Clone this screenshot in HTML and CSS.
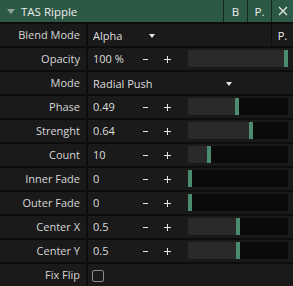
FILE: index.html
```html
<!DOCTYPE html>
<html>
<head>
<meta charset="utf-8">
<link rel="stylesheet" href="styles.css">
</head>
<body>
<div class="panel">
  <div class="header">
    <div class="title"><span class="caret"></span><span>TAS Ripple</span></div>
    <div class="hbtn">B</div>
    <div class="hbtn">P.</div>
    <div class="hbtn x"><svg width="10" height="10" viewBox="0 0 10 10"><path d="M1 1 L9 9 M9 1 L1 9" stroke="#e6e6e6" stroke-width="1.3"/></svg></div>
  </div>

  <div class="row">
    <div class="label">Blend Mode</div>
    <div class="drop blend"><span>Alpha</span><span class="arrow"></span></div>
    <div class="fill"></div>
    <div class="pbtn">P.</div>
  </div>

  <div class="row">
    <div class="label">Opacity</div>
    <div class="val">100 %</div>
    <div class="step"><span class="minus"></span></div>
    <div class="step"><span class="plus"></span></div>
    <div class="slider full"><div class="track" style="width:96px"></div><div class="handle"></div></div>
  </div>

  <div class="row">
    <div class="label">Mode</div>
    <div class="drop mode"><span>Radial Push</span><span class="arrow"></span></div>
  </div>

  <div class="row">
    <div class="label">Phase</div>
    <div class="val">0.49</div>
    <div class="step"><span class="minus"></span></div>
    <div class="step"><span class="plus"></span></div>
    <div class="slider"><div class="track" style="width:47px"></div><div class="handle"></div></div>
  </div>

  <div class="row">
    <div class="label">Strenght</div>
    <div class="val">0.64</div>
    <div class="step"><span class="minus"></span></div>
    <div class="step"><span class="plus"></span></div>
    <div class="slider"><div class="track" style="width:61px"></div><div class="handle"></div></div>
  </div>

  <div class="row">
    <div class="label">Count</div>
    <div class="val">10</div>
    <div class="step"><span class="minus"></span></div>
    <div class="step"><span class="plus"></span></div>
    <div class="slider"><div class="track" style="width:19px"></div><div class="handle"></div></div>
  </div>

  <div class="row">
    <div class="label">Inner Fade</div>
    <div class="val">0</div>
    <div class="step"><span class="minus"></span></div>
    <div class="step"><span class="plus"></span></div>
    <div class="slider"><div class="track" style="width:0px"></div><div class="handle"></div></div>
  </div>

  <div class="row">
    <div class="label">Outer Fade</div>
    <div class="val">0</div>
    <div class="step"><span class="minus"></span></div>
    <div class="step"><span class="plus"></span></div>
    <div class="slider"><div class="track" style="width:0px"></div><div class="handle"></div></div>
  </div>

  <div class="row">
    <div class="label">Center X</div>
    <div class="val">0.5</div>
    <div class="step"><span class="minus"></span></div>
    <div class="step"><span class="plus"></span></div>
    <div class="slider"><div class="track" style="width:48px"></div><div class="handle"></div></div>
  </div>

  <div class="row">
    <div class="label">Center Y</div>
    <div class="val">0.5</div>
    <div class="step"><span class="minus"></span></div>
    <div class="step"><span class="plus"></span></div>
    <div class="slider"><div class="track" style="width:48px"></div><div class="handle"></div></div>
  </div>

  <div class="row">
    <div class="label">Fix Flip</div>
    <div class="check"><span class="box"></span></div>
  </div>
</div>
</body>
</html>
```
FILE: styles.css
```css
html, body {
  margin: 0;
  padding: 0;
  background: #1a1a1a;
}
.panel {
  width: 293px;
  height: 286px;
  overflow: hidden;
  background: #1a1a1a;
  font-family: "Open Sans", "Noto Sans", sans-serif;
  font-size: 11px;
  color: #dedede;
}
.header {
  display: flex;
  height: 22px;
  background: #2c5846;
}
.title {
  flex: 1;
  display: flex;
  align-items: center;
  color: #ececec;
  font-size: 11.5px;
}
.caret {
  width: 0;
  height: 0;
  margin-left: 7px;
  margin-right: 6px;
  margin-top: 1px;
  border-left: 4px solid transparent;
  border-right: 4px solid transparent;
  border-top: 5px solid #8fa49a;
}
.hbtn {
  width: 23px;
  border-left: 1px solid #142a20;
  display: flex;
  align-items: center;
  justify-content: center;
  color: #ececec;
  font-size: 11.5px;
}
.hbtn.x {
  width: 21px;
}
.row {
  display: flex;
  height: 22px;
  border-top: 2px solid #0d0d0d;
  align-items: stretch;
}
.label {
  width: 80px;
  padding-right: 6px;
  border-right: 2px solid #0d0d0d;
  text-align: right;
  line-height: 22px;
  color: #d6d6d6;
  white-space: nowrap;
}
.val {
  width: 41px;
  padding-left: 5px;
  line-height: 22px;
}
.drop {
  display: flex;
  align-items: center;
  padding-left: 5px;
  justify-content: space-between;
}
.drop.blend {
  width: 62px;
}
.drop.mode {
  width: 139px;
}
.arrow {
  width: 0;
  height: 0;
  border-left: 3.5px solid transparent;
  border-right: 3.5px solid transparent;
  border-top: 4px solid #e6e6e6;
  margin-top: 1px;
}
.fill {
  flex: 1;
}
.pbtn {
  width: 21px;
  border-left: 1px solid #0d0d0d;
  display: flex;
  align-items: center;
  justify-content: center;
  color: #ececec;
}
.step {
  width: 22px;
  display: flex;
  align-items: center;
  justify-content: center;
  position: relative;
}
.minus {
  width: 5px;
  height: 1px;
  background: #e6e6e6;
}
.plus {
  width: 7px;
  height: 7px;
  position: relative;
}
.plus::before, .plus::after {
  content: "";
  position: absolute;
  background: #e6e6e6;
}
.plus::before {
  left: 0;
  top: 3px;
  width: 7px;
  height: 1px;
}
.plus::after {
  left: 3px;
  top: 0;
  width: 1px;
  height: 7px;
}
.slider {
  width: 100px;
  height: 17px;
  margin: 2px 0 0 10px;
  background: #0a0a0a;
  display: flex;
}
.track {
  background: #2a2a2a;
  height: 100%;
}
.handle {
  width: 4px;
  height: 100%;
  background: #4b8b6f;
}
.check {
  padding-left: 4px;
  display: flex;
  align-items: center;
}
.box {
  width: 10px;
  height: 10px;
  border: 1px solid #8a8a8a;
  border-radius: 2px;
  margin-top: 1px;
}
```
